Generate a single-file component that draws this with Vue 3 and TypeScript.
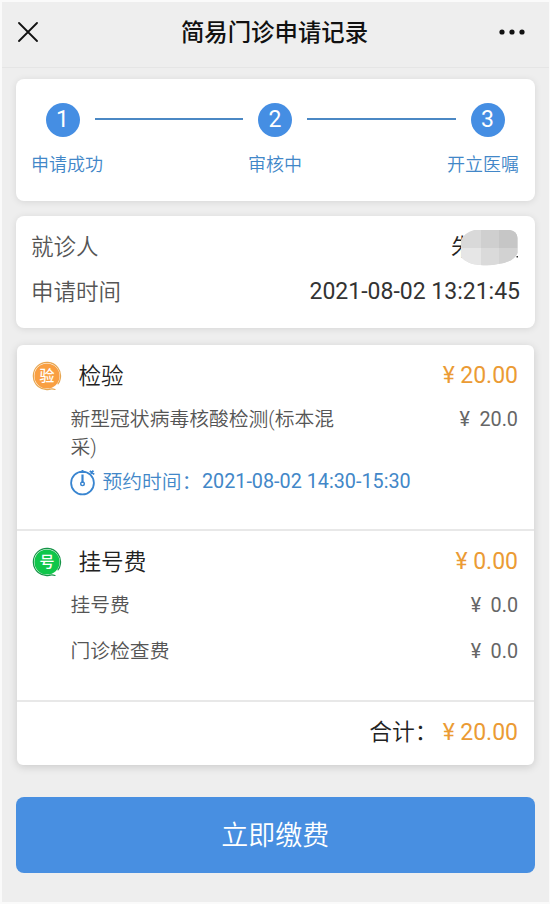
<script setup lang="ts">
interface FeeItem {
  name: string
  price: string
}

interface FeeGroup {
  kind: 'test' | 'register'
  mark: string
  title: string
  total: string
  items: FeeItem[]
  appointment?: string
}

const steps: string[] = ['申请成功', '审核中', '开立医嘱']

const groups: FeeGroup[] = [
  {
    kind: 'test',
    mark: '验',
    title: '检验',
    total: '20.00',
    items: [{ name: '新型冠状病毒核酸检测(标本混采)', price: '20.0' }],
    appointment: '2021-08-02 14:30-15:30',
  },
  {
    kind: 'register',
    mark: '号',
    title: '挂号费',
    total: '0.00',
    items: [
      { name: '挂号费', price: '0.0' },
      { name: '门诊检查费', price: '0.0' },
    ],
  },
]
</script>

<template>
  <div class="page">
    <header class="nav">
      <svg class="close" viewBox="0 0 20 20" width="20" height="20">
        <path d="M1 1 L19 19 M19 1 L1 19" />
      </svg>
      <h1>简易门诊申请记录</h1>
      <svg class="more" viewBox="0 0 26 6" width="26" height="6">
        <circle cx="3" cy="3" r="2.6" />
        <circle cx="13" cy="3" r="2.6" />
        <circle cx="23" cy="3" r="2.6" />
      </svg>
    </header>

    <main>
      <section class="card steps">
        <template v-for="(label, i) in steps" :key="label">
          <div v-if="i > 0" class="line"></div>
          <div class="step">
            <span class="dot">{{ i + 1 }}</span>
            <span class="label">{{ label }}</span>
          </div>
        </template>
      </section>

      <section class="card info">
        <div class="row">
          <span class="key">就诊人</span>
          <span class="name">
            朱
            <svg class="mask" viewBox="0 0 58 36" width="58" height="36">
              <defs>
                <clipPath id="mask-shape">
                  <path d="M14 0 H50 Q57 1 57.500 8 V23 Q54 32 38 34 Q30 36 20 35 Q7 34 1 27 V10 Q4 3 14 0Z" />
                </clipPath>
              </defs>
              <g clip-path="url(#mask-shape)">
                <rect width="58" height="36" fill="#d9d9d9" />
                <rect x="21" width="18" height="18" fill="#cfcfcf" />
                <rect x="39" width="19" height="18" fill="#c6c6c6" />
                <rect y="18" width="21" height="18" fill="#e6e6e6" />
                <rect x="21" y="18" width="18" height="18" fill="#dadada" />
                <rect x="39" y="18" width="19" height="18" fill="#d2d2d2" />
              </g>
              <path d="M56.500 26 h1.500 v1.500 h-1.500z" fill="#333" />
            </svg>
          </span>
        </div>
        <div class="row">
          <span class="key">申请时间</span>
          <span class="value">2021-08-02 13:21:45</span>
        </div>
      </section>

      <section class="card bill">
        <div v-for="g in groups" :key="g.kind" class="group" :class="g.kind">
          <div class="head">
            <svg class="badge" viewBox="0 0 30 30" width="30" height="30">
              <circle class="fill" cx="15" cy="15" r="12.600" />
              <path class="ring" d="M23 28.500 Q20 27.400 17 28.400 A13.600 13.600 0 1 1 28.300 17.500 Q28 20.500 26 22.800" />
              <text x="15" y="20.400">{{ g.mark }}</text>
            </svg>
            <h2>{{ g.title }}</h2>
            <span class="amount"><i>¥</i>{{ g.total }}</span>
          </div>
          <div v-for="item in g.items" :key="item.name" class="item">
            <span class="item-name">{{ item.name }}</span>
            <span class="price"><i>¥</i>{{ item.price }}</span>
          </div>
          <div v-if="g.appointment" class="appointment">
            <svg class="clock" viewBox="0 0 26 28" width="26" height="28">
              <circle cx="12.500" cy="15" r="11.400" />
              <path d="M12.500 2 V5 M9.800 4 H15.200 M19.800 3 L24.200 6.400 M23.400 2.600 L20.800 5.800" />
              <path class="hand" d="M12.500 6.500 V15" />
              <circle class="hub" cx="12.500" cy="15.800" r="1.800" />
            </svg>
            <span class="when">预约时间：</span>
            <span>{{ g.appointment }}</span>
          </div>
        </div>
        <div class="sum">
          <span>合计：</span>
          <span class="amount"><i>¥</i>20.00</span>
        </div>
      </section>

      <button class="pay" type="button">立即缴费</button>
    </main>
  </div>
</template>

<style>
body {
  margin: 0;
  background: #fafafa;
}
</style>

<style scoped>
.page {
  box-sizing: border-box;
  width: 550px;
  height: 904px;
  border: solid #fafafa;
  border-width: 2px 1px 2px 2px;
  background: #eeeeee;
  font-family: Roboto, 'Noto Sans CJK SC', sans-serif;
  font-weight: 350;
  overflow: hidden;
}

.nav {
  box-sizing: border-box;
  height: 66px;
  display: flex;
  align-items: center;
  justify-content: space-between;
  padding: 0 24px 6px 16px;
  border-bottom: 1px solid #e5e5e5;
}

.close {
  fill: none;
  stroke: #111;
  stroke-width: 1.8;
  stroke-linecap: round;
}

.more {
  fill: #111;
}

h1,
h2 {
  margin: 0;
}

h1 {
  font-size: 23.4px;
  font-weight: 500;
  line-height: 32px;
  color: #111;
  margin-left: 12px;
  padding-top: 3px;
}

main {
  display: flex;
  flex-direction: column;
  padding: 11px 14px 0 13.5px;
}

.card {
  box-sizing: border-box;
  background: #fff;
  border-radius: 8px;
  box-shadow: 0 1px 7px rgba(0, 0, 0, 0.1);
}

.steps {
  height: 122px;
  display: flex;
  align-items: flex-start;
  padding: 24px 16px 0 15.5px;
}

.step {
  width: 72px;
  display: flex;
  flex-direction: column;
  align-items: center;
}

.step:first-child {
  align-items: flex-start;
}

.step:last-child {
  align-items: flex-end;
}

.step:first-child .dot {
  margin-left: 14.5px;
}

.step:last-child .dot {
  margin-right: 14.5px;
}

.dot {
  width: 34px;
  height: 34px;
  border-radius: 50%;
  background: #458ee3;
  color: #fff;
  font-size: 23px;
  font-weight: 400;
  line-height: 33px;
  text-align: center;
}

.label {
  margin-top: 14px;
  font-size: 18px;
  line-height: 28px;
  color: #4287c8;
  white-space: nowrap;
}

.line {
  flex: 1;
  height: 2px;
  margin: 15px -4px 0 -8.5px;
  background: #4b88c4;
}

.step:nth-child(3) + .line {
  margin-left: -4px;
  margin-right: -8.5px;
}

.info {
  height: 112px;
  margin-top: 15px;
  padding: 9px 15px 0 15.5px;
}

.row {
  display: flex;
  justify-content: space-between;
  height: 44.5px;
  line-height: 44px;
  font-size: 22.5px;
  color: #555;
}

.name {
  position: relative;
  width: 69px;
  color: #222;
}

.mask {
  position: absolute;
  left: 8.5px;
  top: 5px;
}

.value {
  font-size: 23px;
  font-weight: 400;
  color: #333;
}

.bill {
  margin: 17px 1px 0 1.5px;
  height: 420px;
  border-radius: 6px;
  box-shadow: 0 2px 8px rgba(0, 0, 0, 0.15);
}

.group {
  box-sizing: border-box;
  padding: 10px 16px 0 15px;
  border-bottom: 2px solid #e8e8e8;
}

.test {
  height: 186px;
}

.register {
  height: 171px;
}

.head {
  display: flex;
  align-items: center;
  height: 42px;
}

.badge .fill {
  fill: #f99f42;
}

.badge .ring {
  fill: none;
  stroke: #e7a650;
  stroke-width: 1.2;
  stroke-linecap: round;
}

.register .fill {
  fill: #0fc64a;
}

.register .ring {
  stroke: #159447;
}

.badge text {
  fill: #fff;
  font-size: 15px;
  font-weight: 500;
  text-anchor: middle;
}

h2 {
  flex: 1;
  margin-left: 16.5px;
  font-size: 22.6px;
  font-weight: 350;
  line-height: 44px;
  padding-top: 1px;
  color: #222;
}

i {
  font-style: normal;
}

.amount {
  font-size: 23px;
  font-weight: 400;
  color: #eb9b34;
}

.head .amount {
  margin-top: -1px;
}

.amount i {
  margin-right: 5.5px;
}

.item {
  display: flex;
  justify-content: space-between;
  padding-left: 38.5px;
  font-size: 19.8px;
  line-height: 28px;
  color: #555;
}

.item-name {
  width: 268px;
  line-break: anywhere;
}

.price {
  font-weight: 400;
  color: #666;
}

.price i {
  margin-right: 9.5px;
}

.test .item {
  padding-top: 9px;
}

.register .item {
  height: 46px;
  line-height: 46px;
}

.appointment {
  display: flex;
  align-items: center;
  height: 40px;
  padding-left: 38px;
  font-size: 19.8px;
  line-height: 28px;
  font-weight: 400;
  color: #4287c8;
}

.when {
  margin-top: 1px;
  margin-left: 6.5px;
  margin-right: 0.5px;
  font-weight: 350;
}

.appointment span:last-child {
  margin-top: -1px;
}

.clock {
  fill: none;
  stroke: #3985d0;
  stroke-width: 1.8;
}

.clock .hand {
  stroke-width: 2.2;
}

.clock .hub {
  stroke-width: 1.4;
}

.sum {
  display: flex;
  justify-content: flex-end;
  height: 62px;
  line-height: 62px;
  padding-right: 16px;
  font-size: 22.8px;
  color: #222;
}

.sum .amount {
  margin-left: 5px;
}

.pay {
  height: 76px;
  margin-top: 31.5px;
  padding: 0 0 2px;
  border: 0;
  border-radius: 8px;
  background: #488fe1;
  color: #fff;
  font-family: inherit;
  font-size: 27px;
  font-weight: 350;
}
</style>
